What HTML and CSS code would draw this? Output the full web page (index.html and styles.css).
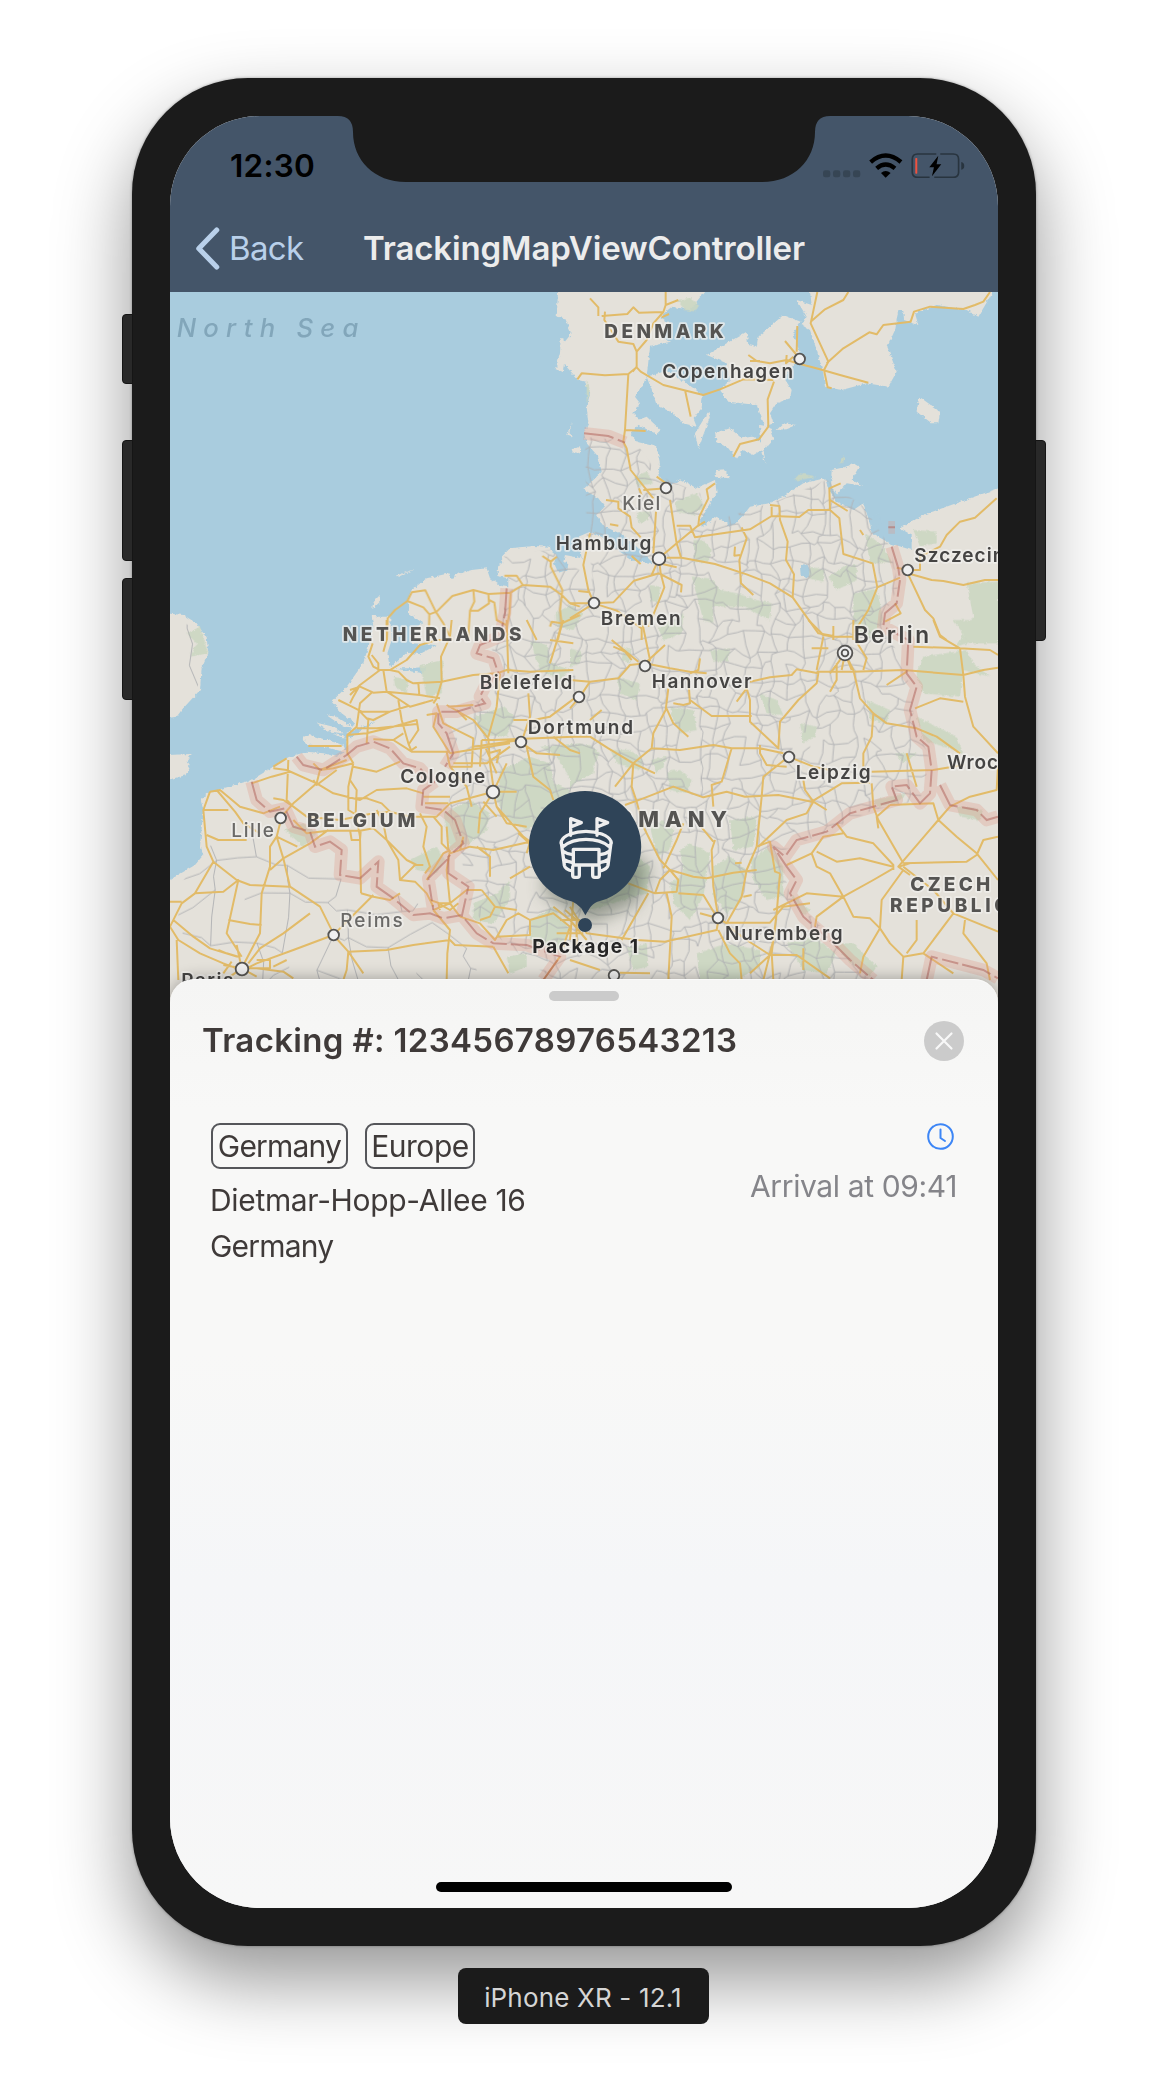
FILE: index.html
```html
<!DOCTYPE html>
<html lang="en">
<head>
<meta charset="utf-8">
<title>TrackingMapViewController</title>
<link rel="stylesheet" href="styles.css">
</head>
<body>
<main class="stage">
  <div class="device">
    <span class="key key-mute"></span><span class="key key-up"></span><span class="key key-down"></span><span class="key key-power"></span>
    <div class="screen">
      <svg class="notch" viewBox="0 0 494 68"><path d="M0 0H494V1H493Q478 1 478 17C478 45 457 67 425 67H69C37 67 16 45 16 17Q16 1 1 1H0Z"/></svg>
      <header class="header">
        <div class="status">
          <span class="time">12:30</span>
          <svg class="indicators" viewBox="728 278 425 77">
            <g fill="#364554"><rect x="728" y="330" width="22" height="21" rx="7"/><rect x="758" y="330" width="22" height="21" rx="7"/><rect x="788" y="330" width="22" height="21" rx="7"/><rect x="818" y="330" width="22" height="21" rx="7"/></g>
            <g fill="none" stroke="#000" stroke-width="13"><path d="M871 305Q916 266 962 305"/><path d="M889 324Q916 301 944 324"/></g>
            <path d="M902 338Q916 326 931 338L916 352Z"/>
            <g fill="none" stroke="#28343f" stroke-width="5"><path d="M1068 281H1012Q996 281 996 297V336Q996 351 1012 351H1048"/><path d="M1080 281H1119Q1135 281 1135 297V336Q1135 351 1119 351H1062"/></g>
            <path d="M1143 305Q1152 307 1152 317T1143 328Z" fill="#28343f"/>
            <rect x="1005" y="293" width="6" height="47" rx="2" fill="#f0523f"/>
            <path d="M1074 286L1047 321H1061L1055 348L1083 312H1069Z"/>
          </svg>
        </div>
        <nav class="nav">
          <a class="back"><svg class="chevron" viewBox="0 0 24 42"><path d="M21 3L3.500 21L21 39"/></svg><span>Back</span></a>
          <h1 class="title">TrackingMapViewController</h1>
        </nav>
      </header>
      <svg class="map" viewBox="30 36 2484 2142">
        <defs>
          <filter id="rough" x="-5%" y="-5%" width="110%" height="110%"><feTurbulence type="fractalNoise" baseFrequency=".09" numOctaves="3" seed="4"/><feDisplacementMap in="SourceGraphic" scale="11" xChannelSelector="R" yChannelSelector="G"/></filter>
          <filter id="soft" x="-40%" y="-40%" width="180%" height="180%"><feGaussianBlur stdDeviation="26"/></filter>
          <clipPath id="germany"><path d="M1275 470L1425 485 1500 590 1620 640 1640 730 1860 660 2000 600 2110 680 2190 800 2215 920 2165 1020 2240 1180 2265 1330 2310 1440 2280 1560 2140 1590 1990 1660 1850 1720 1890 1840 2130 2100 1180 2100 1000 1960 930 1880 900 1710 870 1600 860 1440 870 1300 980 1250 1000 1080 1050 930 1030 830 1170 810 1300 900 1280 760Z"/></clipPath>
          <clipPath id="west"><path d="M30 1860L140 1700 330 1650 600 1800 900 1920 960 2100H30ZM30 1010L140 1060 110 1240 30 1310Z"/></clipPath>
        </defs>
        <rect x="30" y="36" width="2484" height="2142" class="water"/>
        <g class="land" filter="url(#rough)">
          <path d="M1195 20L1190 110 1215 115 1235 160 1212 188 1210 175 1202 175 1200 220 1187 268 1208 275 1212 252 1255 300 1275 305 1290 340 1280 380 1285 430 1272 460 1280 490 1315 530 1325 575 1300 600 1270 628 1315 655 1335 680 1308 705 1335 740 1390 765 1430 800 1480 850 1420 842 1350 795 1325 770 1290 755 1255 770 1265 835 1215 825 1210 845 1225 850 1222 870 1195 878 1182 850 1190 825 1172 810 1170 800 1120 798 1050 805 1025 830 1030 850 1015 855 1012 888 1045 895 1045 922 1022 918 990 895 980 865 935 870 885 885 875 895 868 880 800 895 755 930 740 965 748 970 745 1020 690 1010 655 1010 635 1005 640 1040 625 1100 610 1150 560 1220 515 1265 545 1300 585 1330 560 1365 565 1410 530 1430 490 1420 440 1415 385 1432 340 1460 275 1500 180 1528 150 1535 122 1560 130 1590 120 1700 130 1725 105 1755 20 1805V2200H2530V620L2430 655 2290 705 2220 745 2255 765 2255 810 2190 790 2135 760 2130 730 2110 670 2080 690 2030 665 2005 625 1995 595 1930 610 1870 650 1825 670 1770 680 1730 730 1710 738 1670 710 1625 740 1620 720 1650 670 1670 640 1665 600 1610 625 1560 598 1520 625 1495 585 1500 550 1490 500 1430 485 1410 460 1445 425 1420 400 1440 370 1425 350 1445 320 1460 290 1470 200 1530 185 1505 175 1530 130 1500 110 1535 80 1590 90 1645 20Z"/>
          <path d="M20 1000L70 1005 110 1030 140 1075 145 1120 125 1165 120 1230 65 1290 50 1310 20 1315ZM20 1425L95 1422 80 1445 90 1460 80 1485 20 1500ZM660 945L660 965 637 988 640 965ZM707 887L765 868 715 890ZM428 1375L450 1365 500 1380 550 1395 560 1418 500 1402 440 1392ZM470 1328L520 1340 570 1375 545 1375 500 1350ZM500 1306L530 1310 580 1342 550 1340ZM1222 465L1235 425 1228 460 1242 470ZM1238 510L1260 500V520Z"/>
          <g transform="translate(1230)"><path d="M230 290L290 272 350 310 398 345 395 385 370 415 380 440 340 430 310 400 260 375 245 330ZM410 225L470 190 530 155 535 195 560 200 565 170 600 140 640 105 692 125 670 160 690 220 670 260 640 290 665 330 660 355 620 370 600 400 610 430 585 440 560 375 475 365 450 330 480 300 470 250ZM435 460L480 445 515 475 545 470 592 500 550 525 520 510 500 537 475 505 440 485ZM570 435L600 440 612 475 580 510 588 552 575 520ZM620 450L640 430 680 435 650 448ZM415 395L420 410 385 505 375 460ZM190 425L230 410 272 450 260 462 215 440ZM433 590L440 570 465 568 477 595ZM1048 350L1110 395 1105 430 1085 430 1040 395ZM785 570L830 560 850 550 867 560 845 600 880 618 830 610 800 645 783 620ZM680 60L725 75 718 20H1275L1260 50 1225 110 1190 90 1100 75 1035 100 1045 135 1002 120 1000 90 985 90 975 150 952 200 980 275 955 320 890 310 815 330 765 320 760 280 740 210 720 150 695 135 710 110ZM0 150L5 165 0 180ZM5 508L32 503 30 520 8 516Z"/></g>
        </g>
        <g class="water" filter="url(#rough)"><path d="M690 1005L745 1000 790 1030 752 1050 755 1090 830 1095 780 1122 740 1118 690 1165 682 1120 695 1080ZM700 1165L790 1180 800 1160 750 1165ZM480 1350L560 1362 650 1320 570 1375ZM1920 860L1940 850 1955 880 1940 895 1922 885ZM2130 715L2160 700 2165 730 2140 745Z"/></g>
        <g class="green" filter="url(#rough)">
          <path d="M80 1060L120 1040 145 1120 90 1130 110 1090ZM1187 1000L1230 975 1270 1000 1240 1050 1190 1040ZM780 1155L850 1140 845 1240 800 1250ZM700 1190L745 1200 740 1240 705 1220ZM1110 1080L1160 1095 1175 1150 1230 1170 1200 1200 1140 1170ZM945 1310L1030 1280 1065 1310 1040 1370 970 1365ZM375 1650L430 1630 470 1660 430 1700ZM750 1740L830 1700 855 1740 830 1780 770 1770ZM1020 1470L1110 1430 1170 1450 1180 1510 1230 1530 1200 1600 1100 1650 1040 1620 1010 1560ZM850 1600L930 1560 990 1600 980 1650 930 1690 870 1710ZM940 1870L1010 1840 1050 1800 1050 1860 1000 1930 940 1920ZM1110 1920L1180 1880 1230 1950 1200 2010 1110 1990ZM1040 2030L1100 2020 1100 2060 1050 2080ZM1140 1400L1260 1390 1310 1410 1300 1480 1240 1510 1190 1430Z"/>
          <g transform="translate(1230)"><path d="M320 60L360 55 388 75 375 95 345 90ZM50 300L60 330 50 370ZM195 590L230 575 250 610 200 620ZM315 665L380 640 405 680 370 705 320 695ZM370 780L400 780 425 810 420 840 375 850ZM200 700L240 690 235 720 205 730ZM240 915L270 920 265 970 240 960ZM365 890L420 895 450 930 500 940 560 960 605 970 600 1020 560 1000 520 980 430 980 430 1030 400 1020ZM775 890L820 860 860 855 860 900 800 930ZM720 860L765 870 760 905 715 895ZM885 760L930 790 970 850 900 850ZM850 940L920 925 940 1020 900 1080 850 1040ZM1030 750L1100 755 1100 790 1050 800ZM1190 910L1284 905 1284 1060 1160 1100 1210 1010ZM265 1045L340 1000 335 1060 280 1080ZM670 600L690 580 740 590 690 600ZM805 550L825 525 820 548Z"/></g>
          <g transform="translate(1230 1020)"><path d="M1150 0L1284 0V70L1200 70ZM1060 110L1190 90 1210 130 1260 170 1180 150 1170 230 1060 220 1040 160ZM1040 290L1160 350 1180 400 1120 380 1060 360ZM140 170L210 190 200 240 150 220ZM160 85L185 90 180 130 155 120ZM0 85L35 95 30 130 0 140ZM420 90L480 85 475 125 430 125ZM300 260L370 270 380 330 330 340 310 300ZM570 220L620 240 640 285 590 280ZM690 310L740 320 735 350 700 370ZM120 390L180 390 220 420 210 450 140 430ZM240 420L290 410 280 440 260 460ZM290 455L330 450 365 480 350 520 300 510ZM0 380L60 375 90 400 60 450 20 470 0 510ZM890 240L960 270 950 310 900 300ZM910 540L1010 520 980 550 920 560ZM1160 560L1240 570 1230 600 1170 590ZM480 600L560 590 550 680 490 690ZM540 720L600 680 640 740 640 830 590 840 550 780ZM330 690L360 670 420 700 400 830 360 900 310 850 300 790 340 760ZM430 740L480 710 530 750 510 850 470 880 430 830ZM240 620L280 600 310 630 300 690 260 710ZM380 1000L470 970 570 990 570 1040 500 1080 390 1080ZM650 970L730 950 800 1000 770 1060 700 1050ZM790 970L850 970 920 1040 900 1070 840 1030ZM660 820L720 870 700 890ZM180 690L240 740 230 820 60 870 80 800ZM170 980L230 970 235 1040 190 1050ZM975 400L1040 400 1000 430Z"/></g>
        </g>
        <g clip-path="url(#germany)"><path class="lane" id="lanes-dense"/></g>
        <g clip-path="url(#west)"><path class="lane" id="lanes-sparse"/></g>
        <g class="road">
          <path d="M742 963L755 937 796 931 827 995 850 1030 875 1080M742 963L705 990 683 1015 680 1080M742 963L790 982 808 1003 830 995 877 948 940 930 985 942 1052 938 1088 915 1170 920 1205 945 1230 970 1260 980M808 1003L806 1080M940 930L943 965 930 992 924 1080M930 992L955 992 987 970 985 942M987 960L1003 968 1010 1020 1038 1035M1033 887H1070L1088 915M1052 938L1048 1000 1036 1060M1147 828L1172 845 1190 830M1172 845V860L1207 930 1200 990 1205 1030 1193 1080M1205 1030L1175 1025 1170 1040M1205 1030L1260 1005"/>
          <g transform="translate(1230)"><path d="M60 55L85 82V108M95 108L172 102 190 82 207 98 280 96 287 75V36M287 75L325 60M280 96L250 130 230 180 200 215M275 112L297 102M105 95L103 120 145 185 190 192 200 215V260L188 275M22 298L35 280 105 286 175 282 200 262 212 275 280 315 400 345 450 328 520 298 610 300M175 282L165 450 160 485 170 505 182 570 250 655M165 450L227 453M345 330L362 410M612 305L593 358 595 440 567 478 510 492 490 530M535 225L560 243 600 250 650 240 690 252M540 243H570M645 183L680 225M682 138L680 215M650 225L648 250 670 230M742 36L722 130 775 245 762 270M835 36L820 60 765 88 722 125M690 252L750 268 810 285 895 308M762 270L773 322 785 325M770 250L820 205 898 157 920 163 940 135 1022 125 1032 95 1080 80 1180 87 1215 75 1240 65 1260 36"/>
          <path d="M108 660L145 665V685L180 710 185 742 212 772M120 733L145 737M260 590L288 610M220 630L290 625M207 625L215 645M258 695L250 820M300 660L320 790 333 832M320 737H360L375 772 540 748 605 708 688 711 715 690H780L808 715 820 822 908 850 922 922M780 690L778 625 812 610M833 693L780 660M600 675L628 678 630 720 653 785 648 840 672 883 668 952M605 680V708M267 835L320 790 380 740 405 725M385 735L388 710 415 655 410 628 435 610M515 742L530 775 508 840 513 910 550 945M495 800L493 827 510 825M290 833H335L435 852 530 883 600 910 668 952 745 1060 790 1068M267 835L272 880 283 922 262 975 235 1040M267 880L192 902 130 967 72 970M267 880L335 915 333 937M185 828L212 852M267 850L320 862M267 835L245 885M60 760L40 855 55 930 72 970H0M25 933L60 937M72 970L0 1015M72 970L140 992 215 1045V1080M922 922L895 990 850 1060M922 922L990 893M870 750L880 765M980 863L1013 870 1050 870V830L1110 800 1130 765 1170 725 1215 713 1280 655M1013 880L1085 900 1120 903 1180 915 1245 900H1284M1013 880L1065 990 1090 1015 1110 1065 1130 1080M975 970L992 1000 945 1025M790 1038V1080"/></g>
          <g transform="translate(0 1020)"><path d="M680 0V60L670 95M638 70L625 110 640 140 660 150 600 195 570 225M660 150L690 150 740 120 780 75 830 60 875 60M875 0L870 50 843 110 845 185 830 235 820 250M635 105L655 130V155M690 150L715 155 740 180 760 190 845 185 940 165 1010 160 1040 150 1110 155 1240 150M670 150L680 215 720 240 750 260 820 240M570 210L600 200 640 218 680 215 780 225 840 235M535 240L580 262 605 275 690 275 745 258M600 195L580 230 570 250M638 215L600 250 590 320 562 345V400L580 430M600 275L625 300 620 370M620 295L640 300 690 275M590 325L650 325 770 312M562 345L620 340 700 320 770 300 775 330 745 375M715 240L725 300 745 370 755 395 870 395M775 190L778 225M545 378L445 378M640 358L700 360 755 395M700 360L730 340M770 380L755 390M340 440L380 415M340 445L380 450 470 490 400 550 365 590M385 420L380 540 400 560M275 490L335 470 390 455M470 490L480 450 560 420M460 430L480 450 520 445 580 430M580 430L570 480 590 510 587 580 600 650 603 820M580 430L565 500V570L590 585M470 490L520 520 600 540 650 510 740 505 790 520M580 440L650 455 720 425M530 450L470 495 460 480M620 535L665 550 690 575 750 590 830 590 870 550M590 535H625M400 560L440 590 540 600 640 580 690 575M340 535L370 540 400 560M650 570L670 610 680 660 740 720 770 735M680 660L640 625 600 632 505 632 440 640 400 600M570 630L575 660 600 660 602 635M780 580L800 620 790 680 810 740 795 760M680 660L715 720 720 780 765 785 800 820 820 860M740 760L765 735 790 735M720 780L740 760M603 820L640 830 690 840 720 820M640 825L525 940M150 515L180 510 240 560 310 580 360 560M170 510L225 575 250 610 300 640M150 515L130 570 140 680 160 725 230 780 270 795 390 800 480 860 520 940M130 570H205M140 645L175 660H260M365 590L350 650 330 680V740L305 820 300 940 245 1045M350 650L370 715 390 800M370 715L450 670 505 630M330 750L370 715M350 650L412 680M160 725L105 820 65 850 30 920M105 820L190 815 235 780 200 940 245 1010M30 845H65M205 900L270 912 305 915M30 920L55 960 120 1000 190 1030 230 1045M40 900L100 950 150 985 230 1010M50 960L55 1080M520 945L400 990 290 1030 260 1045M450 880L370 940 300 985 265 1030M520 945L565 995 560 1050 550 1080M565 995L680 990 760 975 870 960 885 975 1000 980M565 995L610 1060M860 1080L862 1000 870 930 820 870M245 1045L290 1045 370 1055 400 1075M190 1035L245 1045 210 1070M290 1020L330 1020V1045H290M340 1040L380 1020M235 1010L200 1000 175 990M245 1045L230 975M245 1045L290 1070M215 1025L190 1060"/>
          <path d="M800 780L850 700 870 690M870 690L860 750 870 850 900 890M870 850L920 810H965M870 850L820 870M870 850L840 850 810 840M840 870L835 850 870 870 895 850M900 890L960 910 1005 960 1040 900 1075 880 1110 900V945L1010 950M965 810L1005 860 990 890 960 900M1005 860L1070 870M860 620L865 690M820 590L845 620V670L865 690M860 255L940 300 985 355 990 430 1000 500M830 250L850 310 940 355 935 440 870 440M890 270L920 300M965 360L1000 360 1240 350M870 400L960 385 1050 370M880 430H980L1050 380M965 360L960 440M940 380L1080 360M975 380L1010 460M985 400L1020 390 1010 430M1080 365L1130 400 1200 405M1100 380L1120 470 1170 510 1180 540M1180 350L1230 390 1260 400M1020 160L1010 260 985 350M1105 220L1110 290 1090 350M1250 230L1170 290 1120 300 1060 300M865 260L940 255M800 285L830 280 820 320 870 400M860 395L870 440 920 500 935 560M1000 515L870 550M1000 515H1070M1040 430L1000 515 1010 560 1090 650M1000 515L960 580 955 640M1010 560L1040 610 1100 620M970 545L1010 590M1110 665L1000 690 930 680 870 700M910 650L900 690M950 680L990 710V770M1110 740L1050 775M1090 650L1110 665 1100 700M790 530L870 530M795 550H865M1075 640L1120 680M1210 0L1170 130M1170 60L1240 70M1100 0L1130 60M1040 0L1045 160M1000 980L1045 1060M1200 1010L1150 1080M1110 900L1180 880 1230 920 1210 980M1180 860L1230 900 1280 960M1240 840L1230 960M1190 940H1270M1200 900H1260M1215 870L1250 900V980"/></g>
          <g transform="translate(1230 1020)"><path d="M215 0L240 120 225 138M125 60L205 125M130 80L165 95 185 120M0 180L60 185 145 175 180 135 225 130M60 185L30 230 0 265M95 270L60 300M225 130L285 75M225 130L300 145 360 155 410 160M360 160L385 150 390 115M295 205L287 270 250 340 245 385 190 430 135 500M287 260L310 310 355 350M310 250L340 255 360 250 355 175M360 240L425 288H545M500 245L530 205 540 240V305L625 385 630 305 685 240 740 190 745 160 680 148 665 165 600 172 540 185M0 350H60L115 385 190 430 185 500 200 545 220 620 270 720 300 750M190 430L255 460M245 385L330 390 430 375 485 385H570L640 400M570 375V400L590 435 650 440M485 385L455 485 425 495 430 560M165 555L220 535 310 500 400 532 470 515 525 530 625 525 725 545 815 490 900 488M655 410L580 470 575 530 560 680M655 410L730 440 780 450M700 480L705 510 730 545 710 580 650 600 565 680M730 545L770 570M715 0L760 45 790 50H850L890 115 880 150M740 150L760 50M725 85H775M740 155H850L1000 150 1180 165 1240 150 1284 143M825 100L780 160M825 100L850 150 870 235 910 280 950 310 1040 325 1100 350 1170 400M910 280L905 350 880 400V440M800 130V180L780 215M815 150L825 100 845 150M850 0V60M950 195L1010 155M1090 0L1110 50 1170 85 1180 165 1185 230 1210 320 1284 400M1030 80L1170 85 1260 90 1284 105M1035 265L1110 235 1180 245M905 455L1090 450 1180 435M1010 400L1040 500M1284 440L1280 510 1200 530 1140 560 1105 600 985 740M960 555L1090 550 1105 600 1160 650 1220 700 1284 780"/>
          <path d="M905 490L910 560 925 600 1000 730M960 555L920 590 925 625M800 610L830 650 910 670 970 735V750M740 695L800 725 870 715 970 740M725 700L740 740 780 760 820 830M650 735L725 700 760 650 820 640M1000 730L1190 725 1220 705 1240 660 1284 650M970 745L910 780 820 830M610 870L710 820 820 830M820 830L850 890 900 895 930 925 960 970 1000 1010M1000 750L935 840 930 925 880 1010 870 1060M820 830L740 890 735 920M1020 730L985 740 1020 765M1000 740L1090 810 1150 880 1284 935M1150 880L1060 1000 1000 1010 995 1080M1040 900V960L1010 1000M1185 900L1180 940 1250 1030 1260 1080M1060 1000L1150 1060M560 680L600 665 615 755 630 760M560 680L530 750 515 830 470 910 445 895M630 760L620 880 605 1000 610 1080M445 895L430 800 425 690 435 660M300 750L370 770 410 775 490 758 560 750M270 780L300 750 325 780 320 815 255 820ZM325 820L400 825 440 890M290 820L305 890 295 1080M340 610L320 660 280 745M385 610L430 665M255 820L175 790M235 820L155 960M200 960L285 965 440 930 445 900M465 908H600L640 860 720 850M445 930L480 1000 510 1030 515 1080M475 920L530 960 600 1005 680 1005 780 1075M600 1005L540 1060M610 960L580 1080M700 985V1050M150 1058L240 1060M390 880L445 895M495 730L515 728M520 830L545 825M0 860L50 940 200 960M0 1020L90 1050"/></g>
        </g>
        <g class="border-band"><path id="borders" d="M1040 925L1035 1000 1020 1070 960 1095 950 1120 1000 1135 1015 1180 975 1220 960 1250 975 1270 890 1295 835 1295V1330L860 1360 880 1420 855 1460M825 1505L790 1530 785 1580 850 1590 885 1620 910 1690 865 1730V1780L925 1820 905 1910M410 1430L430 1455 490 1470 560 1425 590 1400 640 1385 690 1405 730 1450 780 1465 820 1510M275 1505L290 1560 330 1595 375 1585 400 1640 450 1655 465 1700 510 1685 545 1710 540 1785 600 1795 655 1745 650 1820 700 1855 760 1905 810 1900 850 1915 905 1905 950 1960 1000 1990 1100 1995 1200 2030 1150 2100M865 1735L805 1795 820 1890M1272 460L1345 468 1395 488M2185 742H2205M2195 800L2215 865 2220 900 2210 970 2175 1000 2170 1040 2245 1080 2240 1180 2270 1220 2250 1290 2270 1370 2305 1400 2315 1470 2310 1540 2280 1570 2240 1515 2195 1520 2210 1560 2140 1580 2070 1600 2000 1655 1910 1680 1875 1730 1840 1700 1880 1760 1910 1800 1890 1840 1930 1910 2020 1990 2070 2040 2140 2100M2340 1515L2370 1575 2450 1590 2480 1620 2514 1610M2300 2100L2315 2030 2470 2070 2514 2095"/></g>
        <use href="#borders" class="border-line"/>
        <g class="town">
          <circle cx="1919" cy="237" r="16"/><circle cx="1518" cy="624" r="16"/><circle cx="1497" cy="836" r="19"/><circle cx="1302" cy="969" r="16"/><circle cx="2243" cy="870" r="16"/><circle cx="1455" cy="1158" r="16"/><circle cx="1257" cy="1251" r="16"/><circle cx="1083" cy="1386" r="16"/><circle cx="999" cy="1536" r="19"/><circle cx="362" cy="1614" r="16"/><circle cx="521" cy="1965" r="16"/><circle cx="246" cy="2067" r="19"/><circle cx="1887" cy="1431" r="16"/><circle cx="1674" cy="1914" r="16"/><circle cx="1362" cy="2086" r="16"/><circle cx="2055" cy="1119" r="22"/><circle cx="2055" cy="1119" r="10"/>
        </g>
        <g class="label">
          <text x="1507" y="293" textLength="392">Copenhagen</text>
          <text x="1187" y="810" textLength="287">Hamburg</text>
          <text x="1322" y="1035" textLength="240">Bremen</text>
          <text x="2263" y="847" textLength="270">Szczecin</text>
          <text x="1475" y="1224" textLength="300">Hannover</text>
          <text x="959" y="1227" textLength="278">Bielefeld</text>
          <text x="1103" y="1361" textLength="316">Dortmund</text>
          <text x="721" y="1508" textLength="255">Cologne</text>
          <text x="1907" y="1497" textLength="225">Leipzig</text>
          <text x="2361" y="1467" textLength="256">Wrocław</text>
          <text x="1695" y="1981" textLength="353">Nuremberg</text>
          <text x="64" y="2120" textLength="156">Paris</text>
          <text x="2081" y="1088" textLength="226" class="capital">Berlin</text>
          <g class="minor"><text x="1387" y="690" textLength="114">Kiel</text><text x="214" y="1671" textLength="128">Lille</text><text x="541" y="1941" textLength="187">Reims</text></g>
        </g>
        <g class="label country">
          <text x="1333" y="174" textLength="358">DENMARK</text><text x="548" y="1083" textLength="537">NETHERLANDS</text><text x="441" y="1640" textLength="325">BELGIUM</text>
          <text x="1248" y="1641" textLength="453" class="wide">GERMANY</text><text x="2251" y="1833" textLength="240">CZECH</text><text x="2190" y="1897" textLength="355">REPUBLIC</text>
        </g>
        <text class="sea" x="50" y="171" textLength="545">North Sea</text>
        <path d="M1180 1690L1400 1700 1470 1770 1430 1870 1290 1930 1150 1840Z" fill="#445142" opacity=".5" filter="url(#soft)"/>
        <g transform="translate(1020 1470)">
          <path class="pin" d="M255 63A168 168 0 0 1 292 395Q277 401 269 415L256 436 244 415Q232 401 218 395A168 168 0 0 1 255 63Z"/><circle class="pin" cx="255" cy="465" r="21"/>
          <g class="glyph"><path d="M212 196V146L244 158 212 171M291 196V146L323 158 291 171M184 214C190 195 225 184 258 184S326 195 333 214C335 220 331 226 326 229 308 213 280 208 258 208S209 213 191 229C186 226 182 220 184 214M184 218L193 286Q196 298 217 303M333 218L324 286Q321 298 299 303M188 243Q200 252 218 254M191 268Q202 275 218 278M329 243Q318 252 299 254M325 268Q316 275 299 278"/><path d="M220 238H297V285H220ZM218 290V316Q218 322 224 322H232Q238 322 238 316V290M278 290V316Q278 322 284 322H292Q298 322 298 316V290"/></g>
        </g>
        <text class="pin-label" x="1117" y="2018" textLength="317">Package 1</text>
      </svg>
      <section class="sheet">
        <span class="grip"></span>
        <div class="sheet-head"><h2 class="tracking">Tracking #: 12345678976543213</h2><svg class="close" viewBox="0 0 40 40"><circle cx="20" cy="20" r="20"/><path d="M12.500 12.500L27.500 27.500M27.500 12.500L12.500 27.500"/></svg></div>
        <div class="detail">
          <div class="address">
            <div class="tags"><span class="tag tag-country">Germany</span><span class="tag tag-region">Europe</span></div>
            <p class="street">Dietmar-Hopp-Allee 16</p><p class="land-name">Germany</p>
          </div>
          <div class="arrival">
            <svg class="clock" viewBox="0 0 27 27"><circle cx="13.500" cy="13.500" r="12.300"/><path d="M13.500 6.500V15L18 18"/></svg>
            <p class="eta">Arrival at 09:41</p>
          </div>
        </div>
        <span class="home"></span>
      </section>
    </div>
  </div>
  <p class="caption">iPhone XR - 12.1</p>
</main>
<script src="lanes.js"></script>
</body>
</html>
```

FILE: styles.css
```css
* { box-sizing: border-box; margin: 0; }
body { background: #fff; font-family: Inter, "Liberation Sans", sans-serif; }
.stage { width: 1168px; height: 2096px; padding-top: 78px; display: flex; flex-direction: column; align-items: center; overflow: hidden; }
.device { position: relative; width: 904px; height: 1868px; flex: none; padding: 38px; border-radius: 116px; background: #1b1b1b; box-shadow: 0 0 3px rgba(0,0,0,.35), 0 34px 76px rgba(0,0,0,.42); }
.key { position: absolute; width: 11px; left: -10px; background: #292929; border-radius: 4px 0 0 4px; border: 1px solid #151515; }
.key-mute { top: 236px; height: 70px; }
.key-up { top: 362px; height: 121px; }
.key-down { top: 500px; height: 122px; }
.key-power { top: 362px; height: 201px; left: auto; right: -10px; border-radius: 0 4px 4px 0; }
.screen { position: relative; height: 1792px; border-radius: 90px; overflow: hidden; display: flex; flex-direction: column; background: #f7f7f7; }
.notch { position: absolute; top: -1px; left: 167px; width: 494px; height: 68px; fill: #1b1b1b; }
.header { height: 176px; flex: none; background: #445569; }
.status { height: 88px; padding: 0 33px 0 60px; display: flex; justify-content: space-between; align-items: flex-start; }
.time { margin-top: 30px; font-size: 31.500px; line-height: 40px; font-weight: 600; letter-spacing: .25px; }
.indicators { width: 141.600px; height: 25.700px; margin-top: 36.500px; }
.nav { height: 88px; padding-left: 25px; display: grid; grid-template-columns: 168px 1fr; align-items: center; }
.back { display: flex; align-items: center; gap: 9px; color: #b9d0ea; font-size: 33px; letter-spacing: -.65px; }
.chevron { width: 25px; height: 43px; fill: none; stroke: #b9d0ea; stroke-width: 5; stroke-linecap: round; stroke-linejoin: round; }
.title { color: #ececec; font-size: 33px; font-weight: 600; letter-spacing: -.13px; white-space: nowrap; }
.map { width: 828px; height: 714px; flex: none; display: block; }
.water { fill: #a9ccde; }
.land { fill: #e4e1da; }
.green { fill: #cbd7c2; opacity: .9; }
.lane { fill: none; stroke: #b0b2b4; stroke-width: 2.800; }
.road { fill: none; stroke: #e2bb68; stroke-width: 6; stroke-linejoin: round; }
.border-band { fill: none; stroke: #df9788; stroke-opacity: .3; stroke-width: 38; stroke-linejoin: round; }
.border-line { fill: none; stroke: #b0665f; stroke-opacity: .55; stroke-width: 6; stroke-dasharray: 90 14 50 12; }
.town { fill: #efefef; stroke: #555452; stroke-width: 5.500; }
.label { font-size: 57px; font-weight: 600; fill: #454443; stroke: rgba(240,239,236,.75); stroke-width: 11; paint-order: stroke; stroke-linejoin: round; }
.capital { font-size: 68px; font-weight: 600; }
.minor { fill: #6a6967; font-weight: 500; }
.country { font-weight: 800; fill: #555452; }
.wide { font-size: 66px; }
.sea { font-size: 77px; font-style: italic; font-weight: 500; fill: #82a6ba; }
.pin { fill: #2f4458; }
.glyph { fill: none; stroke: #efefef; stroke-width: 10; stroke-linejoin: round; stroke-linecap: round; }
.pin-label { font-size: 58px; font-weight: 700; fill: #262626; stroke: rgba(240,239,236,.75); stroke-width: 10; paint-order: stroke; }
.sheet { position: relative; margin-top: -27px; flex: 1; display: flex; flex-direction: column; border-radius: 24px 24px 0 0; background: linear-gradient(#f5f5f4, #f8f8f7 14%, #f8f8f7 40%, #f5f6f8 65%, #f7f7f7); box-shadow: 0 0 16px rgba(0,0,0,.32); border-top: 1px solid #fafafa; }
.grip { align-self: center; width: 70px; height: 10px; margin-top: 11px; border-radius: 5px; background: #cbcbcb; }
.sheet-head { display: flex; justify-content: space-between; align-items: center; height: 40px; margin: 20px 34px 0 32px; }
.tracking { font-size: 33px; line-height: 38px; margin-top: -2px; font-weight: 600; letter-spacing: .33px; color: #3f3a39; white-space: nowrap; }
.close { width: 40px; height: 40px; fill: #cbcbcb; }
.close path { stroke: #f8f8f8; stroke-width: 2.200; stroke-linecap: round; }
.detail { display: flex; justify-content: space-between; margin: 62px 41px 0 41px; font-size: 30px; color: #3f3a39; white-space: nowrap; }
.tags { display: flex; gap: 17px; }
.tag { height: 46px; border: 2px solid #55565a; border-radius: 9px; line-height: 43px; text-align: center; letter-spacing: -.8px; }
.tag-country { width: 137px; }
.tag-region { width: 110px; letter-spacing: -.45px; }
.street { margin-top: 8px; margin-left: -1px; line-height: 46px; letter-spacing: -.33px; }
.land-name { margin-left: -1px; line-height: 46px; letter-spacing: -.8px; }
.arrival { display: flex; flex-direction: column; align-items: flex-end; }
.clock { width: 27px; height: 27px; margin-right: 3px; fill: none; stroke: #3d86f6; stroke-width: 2; stroke-linecap: round; stroke-linejoin: round; }
.eta { margin-top: 13px; line-height: 46px; letter-spacing: -.38px; color: #85858a; }
.home { width: 296px; height: 10px; border-radius: 5px; background: #000; margin: auto auto 16px; }
.caption { position: relative; width: 251px; height: 56px; margin: 22px 2px 0 0; flex: none; border-radius: 8px; background: #1b1b1b; color: #d5d5d5; font-size: 26px; line-height: 59px; letter-spacing: .17px; text-align: center; white-space: nowrap; }
```

FILE: lanes.js
```js
// Fills a path with an irregular mesh of minor roads.
function drawLanes(id, cell, seed, keep) {
  function rand() {
    seed = (seed * 16807) % 2147483647;
    return seed / 2147483647;
  }
  const cols = Math.ceil(2500 / cell) + 1;
  const rows = Math.ceil(2150 / cell) + 1;
  const at = [];
  for (let r = 0; r < rows; r++) {
    at.push([]);
    for (let c = 0; c < cols; c++) {
      at[r].push([30 + (c + rand() * 0.9) * cell, 36 + (r + rand() * 0.9) * cell]);
    }
  }
  let d = "";
  function link(a, b) {
    if (rand() > keep) return;
    const mx = (a[0] + b[0]) / 2 + (rand() - 0.5) * cell * 0.35;
    const my = (a[1] + b[1]) / 2 + (rand() - 0.5) * cell * 0.35;
    d += `M${a[0].toFixed(1)} ${a[1].toFixed(1)}L${mx.toFixed(1)} ${my.toFixed(1)} ${b[0].toFixed(1)} ${b[1].toFixed(1)}`;
  }
  for (let r = 0; r < rows - 1; r++) {
    for (let c = 0; c < cols - 1; c++) {
      link(at[r][c], at[r][c + 1]);
      link(at[r][c], at[r + 1][c]);
    }
  }
  document.getElementById(id).setAttribute("d", d);
}
drawLanes("lanes-dense", 46, 77, 0.85);
drawLanes("lanes-sparse", 105, 19, 0.6);
```
